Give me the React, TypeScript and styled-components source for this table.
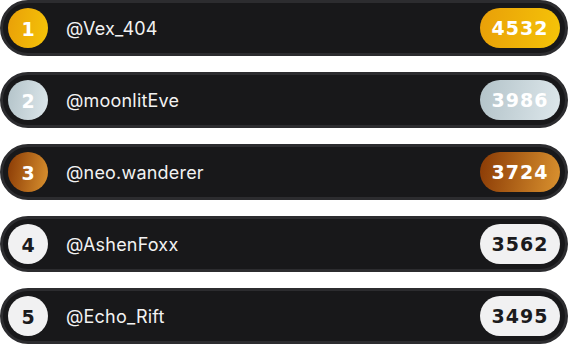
import React from 'react';
import styled, { createGlobalStyle } from 'styled-components';

const GlobalStyle = createGlobalStyle`
  html, body {
    margin: 0;
    padding: 0;
    background: #ffffff;
  }
`;

type Tier = 'gold' | 'silver' | 'bronze' | 'plain';

const fills: Record<Tier, string> = {
  gold: 'linear-gradient(100deg, #e99f08 0%, #f5c408 100%)',
  silver: 'linear-gradient(100deg, #b3c3c9 0%, #dde7eb 100%)',
  bronze: 'linear-gradient(100deg, #8a3a05 0%, #da922f 100%)',
  plain: '#f1f1f2',
};

const Board = styled.div`
  display: flex;
  flex-direction: column;
  gap: 16px;
  width: 568px;
`;

const Row = styled.div`
  box-sizing: border-box;
  display: flex;
  align-items: center;
  height: 56px;
  padding: 0 5px;
  background: #18181a;
  border: 3px solid #2c2c2f;
  border-radius: 28px;
`;

const Rank = styled.div<{ $tier: Tier }>`
  display: flex;
  align-items: center;
  justify-content: center;
  width: 40px;
  height: 40px;
  border-radius: 50%;
  background: ${(p) => fills[p.$tier]};
  color: ${(p) => (p.$tier === 'plain' ? '#1b1b1d' : '#ffffff')};
  font-family: 'DejaVu Sans', 'Liberation Sans', sans-serif;
  font-weight: 700;
  font-size: 19px;
  padding-top: 2px;
  box-sizing: border-box;
  flex-shrink: 0;
`;

const Handle = styled.div`
  flex: 1;
  margin-left: 18px;
  color: #f2f2f2;
  font-family: 'Inter', 'Noto Sans', sans-serif;
  font-size: 18px;
  font-weight: 400;
  letter-spacing: 0.2px;
`;

const Score = styled.div<{ $tier: Tier }>`
  display: flex;
  align-items: center;
  justify-content: center;
  width: 80px;
  height: 40px;
  border-radius: 20px;
  background: ${(p) => fills[p.$tier]};
  color: ${(p) => (p.$tier === 'plain' ? '#1b1b1d' : '#ffffff')};
  font-family: 'DejaVu Sans', 'Liberation Sans', sans-serif;
  font-weight: 700;
  font-size: 19px;
  letter-spacing: 1px;
`;

const players: { handle: string; score: number; tier: Tier }[] = [
  { handle: '@Vex_404', score: 4532, tier: 'gold' },
  { handle: '@moonlitEve', score: 3986, tier: 'silver' },
  { handle: '@neo.wanderer', score: 3724, tier: 'bronze' },
  { handle: '@AshenFoxx', score: 3562, tier: 'plain' },
  { handle: '@Echo_Rift', score: 3495, tier: 'plain' },
];

export default function App() {
  return (
    <>
      <GlobalStyle />
      <Board>
        {players.map((p, i) => (
          <Row key={p.handle}>
            <Rank $tier={p.tier}>{i + 1}</Rank>
            <Handle>{p.handle}</Handle>
            <Score $tier={p.tier}>{p.score}</Score>
          </Row>
        ))}
      </Board>
    </>
  );
}
